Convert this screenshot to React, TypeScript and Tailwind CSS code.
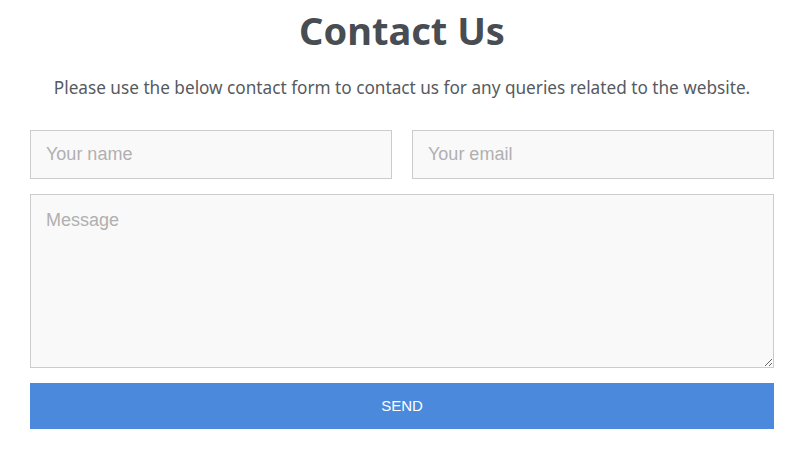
export default function App() {
  return (
    <div className="w-[800px] h-[451px] bg-white overflow-hidden">
      <div className="w-[744px] ml-[30px] flex flex-col items-center">
        <h1 className="mt-[6px] text-[38px] leading-[48px] font-bold text-[#474d52] font-['Noto_Sans',sans-serif]">
          Contact Us
        </h1>
        <p className="mt-[22px] text-[17.2px] leading-[24px] text-[#555a5f] font-['Noto_Sans',sans-serif]">
          Please use the below contact form to contact us for any queries related to the website.
        </p>
        <form className="w-full mt-[30px] flex flex-col" onSubmit={(e) => e.preventDefault()}>
          <div className="flex gap-[20px]">
            <input
              type="text"
              placeholder="Your name"
              className="flex-1 h-[49px] px-[15px] bg-[#f9f9f9] border border-[#cccccc] text-[18px] text-[#555] placeholder:text-[#b0b0b0] font-['Liberation_Sans',sans-serif] outline-none"
            />
            <input
              type="email"
              placeholder="Your email"
              className="flex-1 h-[49px] px-[15px] bg-[#f9f9f9] border border-[#cccccc] text-[18px] text-[#555] placeholder:text-[#b0b0b0] font-['Liberation_Sans',sans-serif] outline-none"
            />
          </div>
          <textarea
            placeholder="Message"
            className="mt-[15px] h-[174px] px-[15px] py-[12px] bg-[#f9f9f9] border border-[#cccccc] text-[18px] text-[#555] placeholder:text-[#b0b0b0] font-['Liberation_Sans',sans-serif] outline-none"
          />
          <button
            type="submit"
            className="mt-[15px] h-[46px] bg-[#4a89dc] text-white text-[15px] font-['Liberation_Sans',sans-serif]"
          >
            SEND
          </button>
        </form>
      </div>
    </div>
  );
}
